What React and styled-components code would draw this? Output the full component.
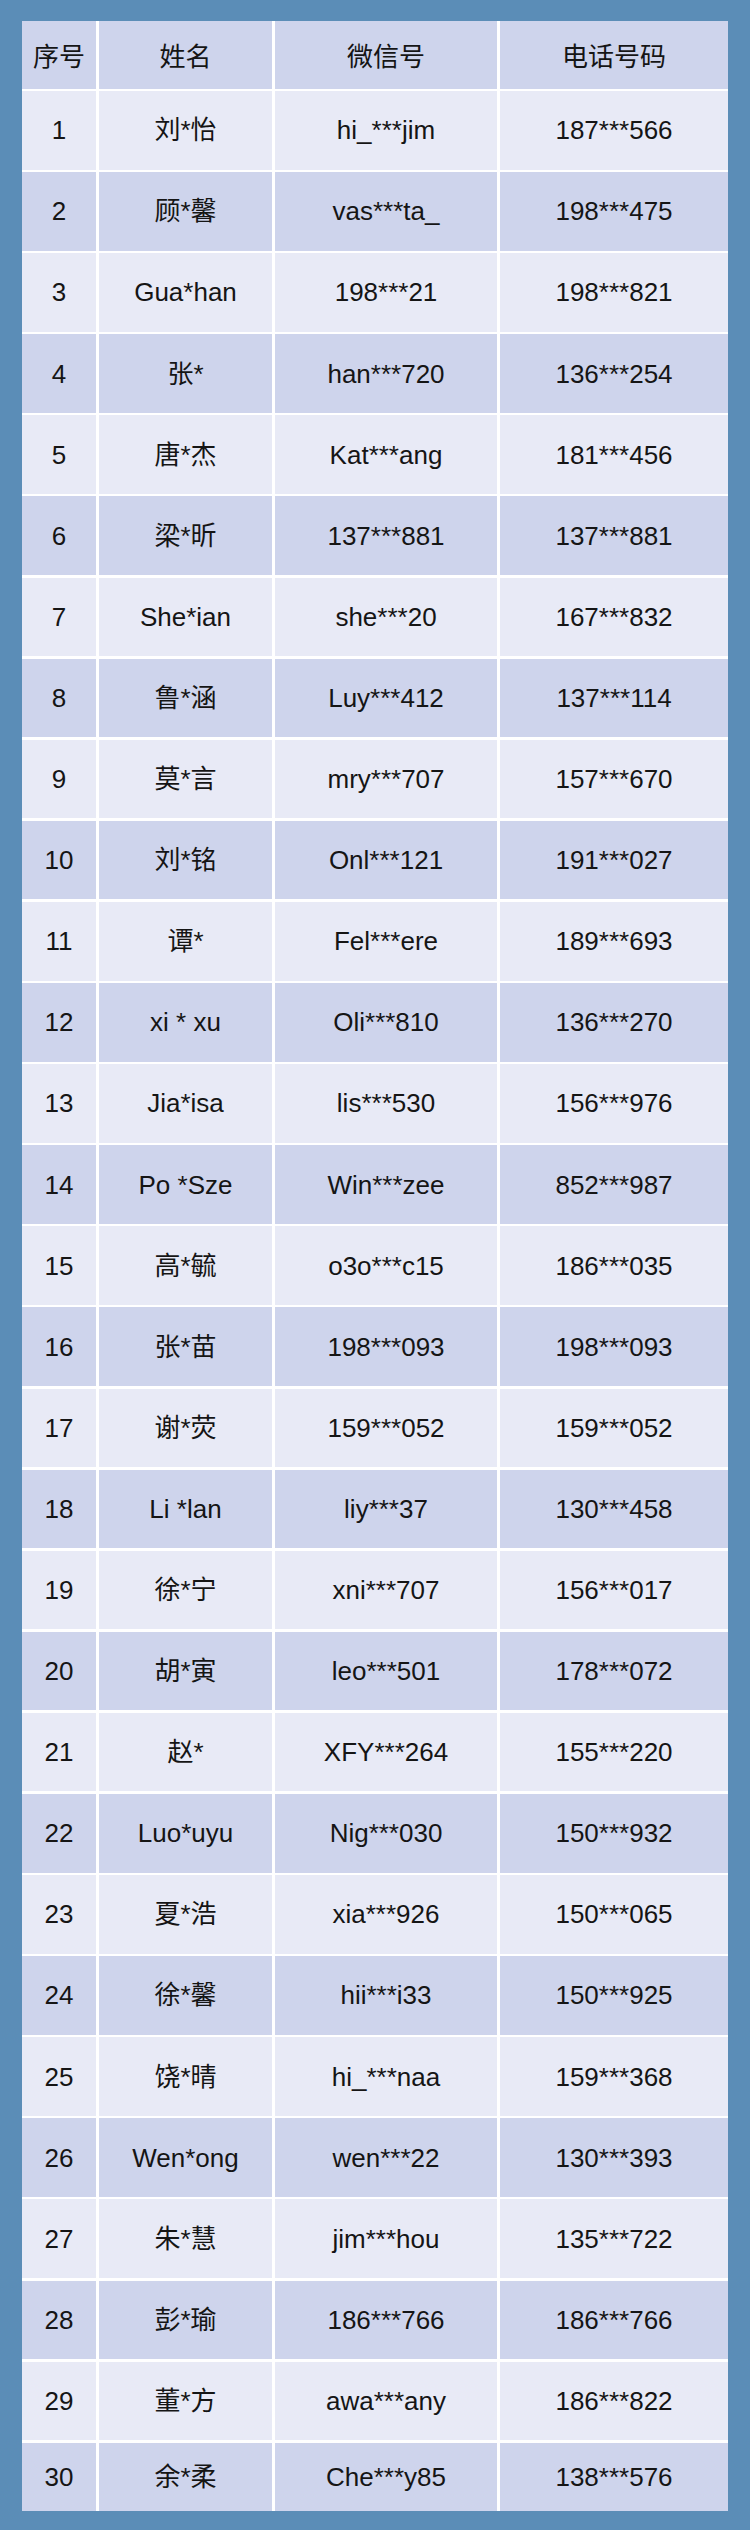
import React from "react";
import styled, { createGlobalStyle } from "styled-components";

const GlobalStyle = createGlobalStyle`
  html, body {
    margin: 0;
    padding: 0;
    background: #5b8db7;
  }
  body {
    font-family: "Liberation Sans", Arial, "Noto Sans CJK SC", sans-serif;
  }
`;

const Page = styled.div`
  width: 750px;
  height: 2530px;
  box-sizing: border-box;
  padding: 21px 22px 19px 22px;
  background: #5b8db7;
`;

const Table = styled.div`
  display: flex;
  flex-direction: column;
  gap: 2.5px;
  width: 706px;
  background: #ffffff;
`;

const Row = styled.div`
  display: grid;
  grid-template-columns: 74px 173px 222px 228px;
  column-gap: 3px;
  height: ${(p) => p.$h}px;
`;

const Cell = styled.div`
  display: flex;
  align-items: center;
  justify-content: center;
  background: ${(p) => (p.$light ? "#e8eaf6" : "#ced4ec")};
  color: #151515;
  font-size: 26px;
  line-height: 1;
  white-space: pre;
`;

const HeadCell = styled(Cell)`
  font-family: "Noto Sans CJK SC", "Liberation Sans", sans-serif;
  font-size: 26px;
  padding-top: 1px;
`;

const data = [
  ["刘*怡", "hi_***jim", "187***566"],
  ["顾*馨", "vas***ta_", "198***475"],
  ["Gua*han", "198***21", "198***821"],
  ["张*", "han***720", "136***254"],
  ["唐*杰", "Kat***ang", "181***456"],
  ["梁*昕", "137***881", "137***881"],
  ["She*ian", "she***20", "167***832"],
  ["鲁*涵", "Luy***412", "137***114"],
  ["莫*言", "mry***707", "157***670"],
  ["刘*铭", "Onl***121", "191***027"],
  ["谭*", "Fel***ere", "189***693"],
  ["xi * xu", "Oli***810", "136***270"],
  ["Jia*isa", "lis***530", "156***976"],
  ["Po *Sze", "Win***zee", "852***987"],
  ["高*毓", "o3o***c15", "186***035"],
  ["张*苗", "198***093", "198***093"],
  ["谢*荧", "159***052", "159***052"],
  ["Li *lan", "liy***37", "130***458"],
  ["徐*宁", "xni***707", "156***017"],
  ["胡*寅", "leo***501", "178***072"],
  ["赵*", "XFY***264", "155***220"],
  ["Luo*uyu", "Nig***030", "150***932"],
  ["夏*浩", "xia***926", "150***065"],
  ["徐*馨", "hii***i33", "150***925"],
  ["饶*晴", "hi_***naa", "159***368"],
  ["Wen*ong", "wen***22", "130***393"],
  ["朱*慧", "jim***hou", "135***722"],
  ["彭*瑜", "186***766", "186***766"],
  ["董*方", "awa***any", "186***822"],
  ["余*柔", "Che***y85", "138***576"],
];

export default function App() {
  return (
    <>
      <GlobalStyle />
      <Page>
        <Table>
          <Row $h={67.5}>
            <HeadCell>序号</HeadCell>
            <HeadCell>姓名</HeadCell>
            <HeadCell>微信号</HeadCell>
            <HeadCell>电话号码</HeadCell>
          </Row>
          {data.map((r, i) => {
            const light = i % 2 === 0;
            const h = i === data.length - 1 ? 68 : 78.6;
            return (
              <Row key={i} $h={h}>
                <Cell $light={light}>{i + 1}</Cell>
                <Cell $light={light}>{r[0]}</Cell>
                <Cell $light={light}>{r[1]}</Cell>
                <Cell $light={light}>{r[2]}</Cell>
              </Row>
            );
          })}
        </Table>
      </Page>
    </>
  );
}
